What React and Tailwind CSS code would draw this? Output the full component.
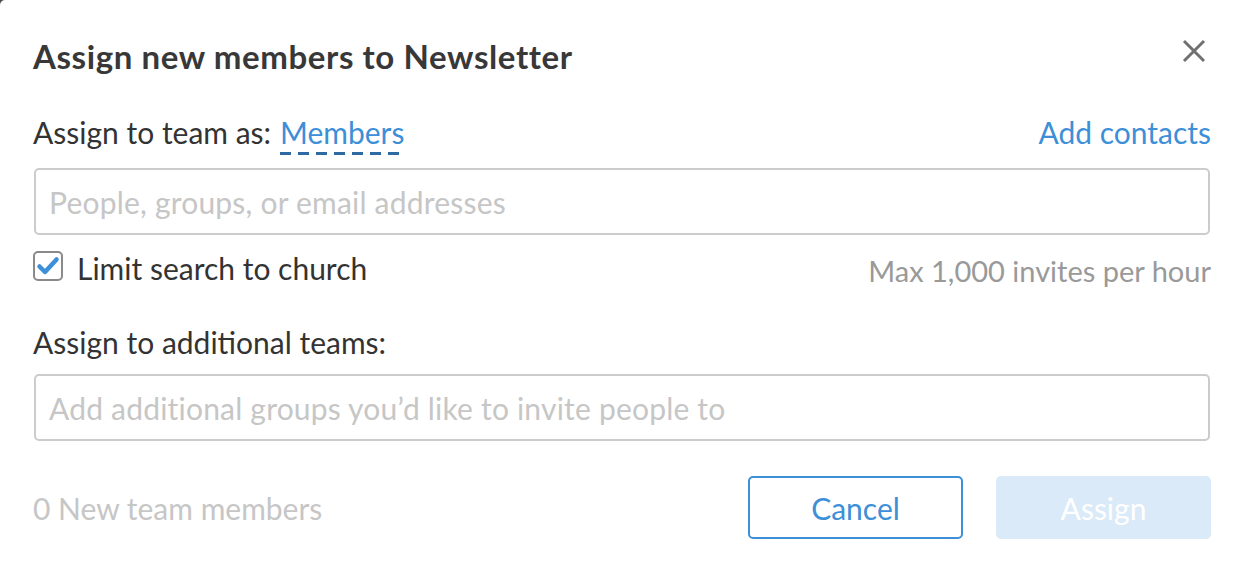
import { useState } from "react";

function CheckIcon() {
  return (
    <svg viewBox="0 0 30 30" className="w-[30px] h-[30px]">
      <rect x="1" y="1" width="28" height="28" rx="4" fill="white" stroke="#8a8a8a" strokeWidth="2" />
      <path d="M6.5 15.5 L12 21 L23.5 8.5" fill="none" stroke="#3d8fd8" strokeWidth="4.5" strokeLinecap="round" strokeLinejoin="round" />
    </svg>
  );
}

export default function App() {
  const [limit, setLimit] = useState(true);

  return (
    <div className="w-[1239px] h-[566px] bg-[#4a4a4a]">
      <div
        className="w-full h-full bg-white text-[#333333] overflow-hidden rounded-tl-[5px]"
        style={{ fontFamily: "Lato, 'Liberation Sans', sans-serif" }}
      >
        <div className="pl-[33px] pr-[28px] pt-[36px] flex flex-col">
          {/* header */}
          <div className="flex items-center justify-between h-[40px]">
            <h2 className="text-[33px] font-bold leading-none text-[#383838] tracking-[0.6px]">
              Assign new members to Newsletter
            </h2>
            <button className="w-[24px] h-[24px] mr-[5px] -mt-[10px] flex items-center justify-center">
              <svg viewBox="0 0 24 24" className="w-[24px] h-[24px]">
                <path d="M2 2 L22 22 M22 2 L2 22" stroke="#707070" strokeWidth="3" fill="none" />
              </svg>
            </button>
          </div>

          {/* team role */}
          <div className="flex items-center justify-between h-[34px] mt-[39px] text-[30px] leading-none">
            <div className="flex items-center">
              <span>Assign to team as:</span>
              <span className="ml-[9px] relative text-[#3d8fd8]">
                Members
                <span className="absolute left-0 right-0 -bottom-[8px] h-[3px] bg-[repeating-linear-gradient(90deg,#2f6aa3_0_11px,transparent_11px_18px)]" />
              </span>
            </div>
            <a className="text-[#3d8fd8]">Add contacts</a>
          </div>

          <div className="mt-[19px] h-[67px] border-2 border-[#cccccc] rounded-[5px] flex items-center px-[13px] mx-[1px]">
            <span className="text-[30px] text-[#c6c6c6] leading-none tracking-[0.2px]">People, groups, or email addresses</span>
          </div>

          <div className="mt-[16px] flex items-center justify-between h-[30px]">
            <label className="flex items-center gap-[14px] text-[30px] leading-none" onClick={() => setLimit(!limit)}>
              {limit ? <CheckIcon /> : <span className="w-[30px] h-[30px] border-2 border-[#8a8a8a] rounded-[4px]" />}
              <span className="mt-[3px]">Limit search to church</span>
            </label>
            <span className="text-[29px] text-[#999999] leading-none mt-[8px]">Max 1,000 invites per hour</span>
          </div>

          <div className="mt-[46px] h-[30px] flex items-center text-[30px] leading-none">
            Assign to additional teams:
          </div>

          <div className="mt-[17px] h-[67px] border-2 border-[#cccccc] rounded-[5px] flex items-center px-[13px] mx-[1px]">
            <span className="text-[30px] text-[#c6c6c6] leading-none tracking-[0.2px]">Add additional groups you’d like to invite people to</span>
          </div>

          <div className="mt-[35px] flex items-center justify-between">
            <span className="text-[30px] text-[#c6c6c6] leading-none">0 New team members</span>
            <div className="flex gap-[33px]">
              <button className="w-[215px] h-[63px] border-2 border-[#3d8fd8] rounded-[5px] text-[#3d8fd8] text-[30px] leading-none">
                Cancel
              </button>
              <button className="w-[215px] h-[63px] bg-[#dbeaf8] rounded-[5px] text-white text-[30px] leading-none">
                Assign
              </button>
            </div>
          </div>
        </div>
      </div>
    </div>
  );
}
